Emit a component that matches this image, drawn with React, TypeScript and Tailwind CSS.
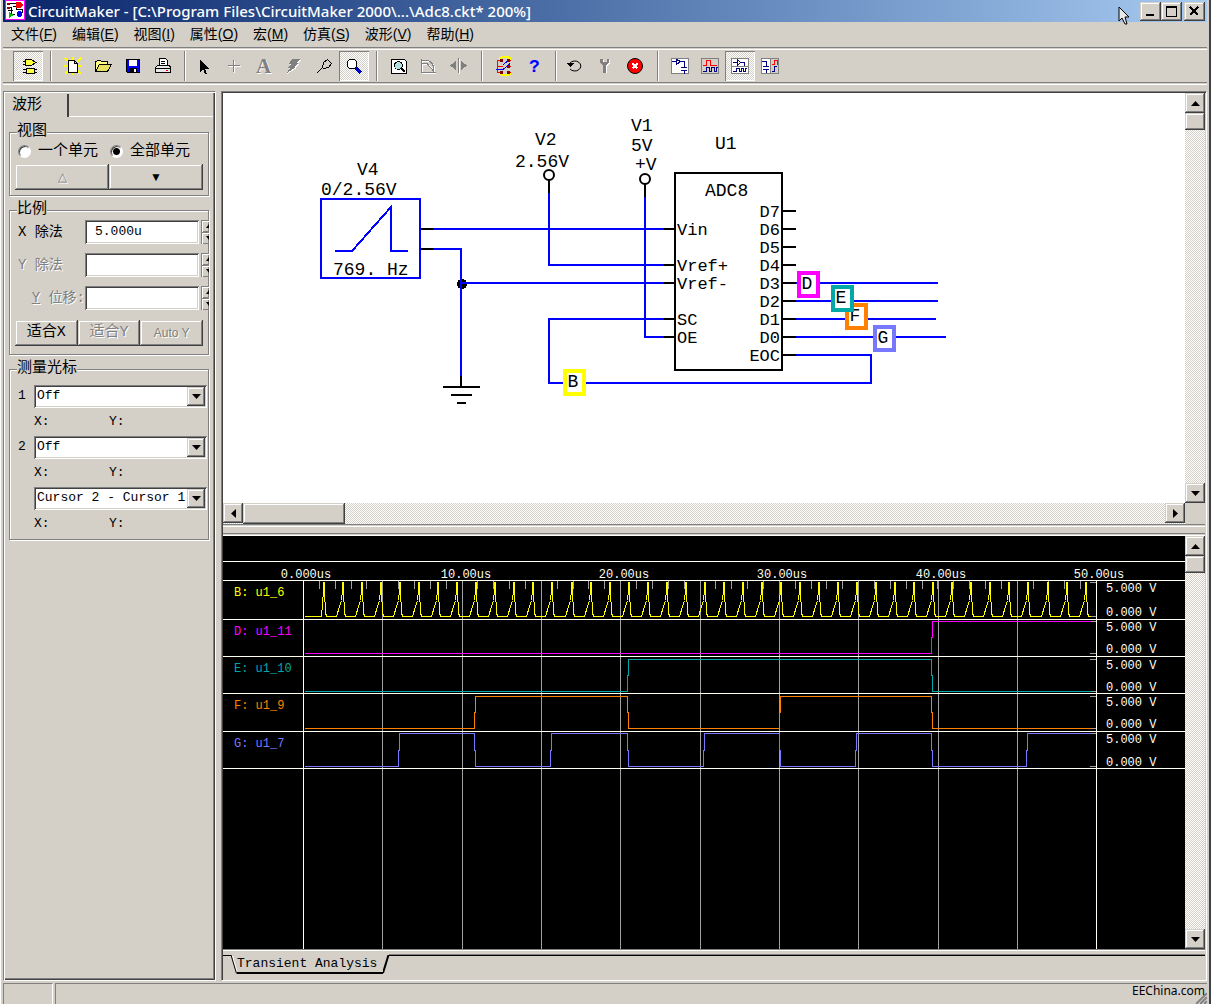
import React from 'react';

const MONO = "font-['Liberation_Mono','Noto_Sans_CJK_SC',monospace]";
const RAISED =
  'bg-[#d4d0c8] shadow-[inset_-1px_-1px_#404040,inset_1px_1px_#d4d0c8,inset_-2px_-2px_#808080,inset_2px_2px_#fff]';
const SUNKEN =
  'bg-white shadow-[inset_1px_1px_#808080,inset_-1px_-1px_#fff,inset_2px_2px_#404040,inset_-2px_-2px_#d4d0c8]';
const DITHER =
  'bg-[conic-gradient(#fff_25%,#d4d0c8_0_50%,#fff_0_75%,#d4d0c8_0)] bg-[length:2px_2px]';
const DISABLED = 'text-[#808080] [text-shadow:1px_1px_#fff]';

/* ---------- Title bar ---------- */

function AppLogo() {
  return (
    <svg width="20" height="20" viewBox="0 0 20 20" shapeRendering="crispEdges" className="mb-0.5 shrink-0" aria-hidden="true">
      <rect width="20" height="20" fill="#ff00ff" />
      <rect x="1" y="1" width="18" height="18" fill="#fff" />
      <path d="M2 3.500h9M3 7.500h3v7h4M8 6.500h3v3h6v3M3 10.500h5" stroke="#000" fill="none" />
      <path d="M2 3h3v2h-3zM2 7h3v2h-3z" fill="#a00000" />
      <path d="M11 2h4l3 3l-3 3h-4z" fill="#f00" />
      <path d="M4 12l5 3l-5 3z" fill="#00c000" />
      <circle cx="14.500" cy="14" r="3" fill="#00f" />
    </svg>
  );
}

function WindowButton({ label, children }: { label: string; children: React.ReactNode }) {
  return (
    <button aria-label={label} className={`flex h-[19px] w-[21px] items-center justify-center ${RAISED}`}>
      <svg width="13" height="13" viewBox="0 0 13 13" shapeRendering="crispEdges" fill="none" stroke="#000">
        {children}
      </svg>
    </button>
  );
}

function TitleBar() {
  return (
    <header className="flex h-[22px] shrink-0 items-center bg-linear-to-r from-[#0a246a] to-[#a6caf0] pr-0.5 pl-0.5">
      <AppLogo />
      <h1 className="ml-[3px] flex-1 truncate font-['Noto_Sans',sans-serif] text-[15px] leading-5 font-medium whitespace-pre text-white">
        {'CircuitMaker - [C:\\Program Files\\CircuitMaker 2000\\...\\Adc8.ckt* 200%]'}
      </h1>
      <svg width="12" height="19" viewBox="0 0 12 19" className="relative z-10 mt-2 mr-2.5 shrink-0" aria-hidden="true">
        <path d="M1 1v14l3-3l3 6h2l-2-7h4z" fill="#e8e8e8" stroke="#000" />
      </svg>
      <WindowButton label="Minimize"><path d="M2 10h8" strokeWidth="2" /></WindowButton>
      <WindowButton label="Maximize"><path d="M1.500 1.500h10v10h-10zM1 2.500h11" /></WindowButton>
      <span className="w-0.5" />
      <WindowButton label="Close">
        <path d="M2 2l8 8M10 2l-8 8" strokeWidth="2" />
      </WindowButton>
    </header>
  );
}

/* ---------- Menu ---------- */

const MENUS: [string, string][] = [
  ['文件', 'F'], ['编辑', 'E'], ['视图', 'I'], ['属性', 'O'], ['宏', 'M'], ['仿真', 'S'], ['波形', 'V'], ['帮助', 'H'],
];

function MenuBar() {
  return (
    <nav className="flex h-[25px] shrink-0 items-center gap-[15px] pb-0.5 pl-2 font-['Liberation_Sans','Noto_Sans_CJK_SC',sans-serif] text-sm">
      {MENUS.map(([name, key]) => (
        <button key={name} className="whitespace-nowrap">
          {name}(<u>{key}</u>)
        </button>
      ))}
    </nav>
  );
}

/* ---------- Toolbar ---------- */

function Tool({ label, pressed, children }: { label: string; pressed?: boolean; children: React.ReactNode }) {
  return (
    <button
      aria-label={label}
      className={`flex size-[30px] items-center justify-center ${
        pressed ? `${DITHER} shadow-[inset_1px_1px_#808080,inset_-1px_-1px_#fff]` : ''
      }`}
    >
      <svg width="20" height="20" viewBox="0 0 20 20" shapeRendering="crispEdges" fill="none" stroke="#000" className="overflow-visible">
        {children}
      </svg>
    </button>
  );
}

function Divider({ narrow }: { narrow?: boolean }) {
  return (
    <span
      className={`h-[30px] w-0.5 border-r border-l border-r-white border-l-[#808080] ${narrow ? 'mr-[3px] ml-1.5' : 'mr-1.5 ml-[7px]'}`}
    />
  );
}

function Groove() {
  return <div className="h-[3px] shrink-0 border-t border-b border-t-[#808080] border-b-white" />;
}

function ToolBar() {
  return (
    <div role="toolbar" className="flex h-8 shrink-0 items-center pl-2.5">
      <Tool label="Digital parts" pressed>
        <path d="M7.500 3.500h6l4 3l-4 3h-6zM8.500 12.500h8v5h-8z" fill="#ffff40" />
        <path d="M5 5.500h3M5 8.500h3M17 6.500h2M5 13.500h3M5 16.500h3M16 13.500h3M16 16.500h3" />
      </Tool>
      <Divider />
      <Tool label="New">
        <path d="M2 2l4 4M18 2l-4 4M2 18l4-4M18 18l-4-4M10 1v3M1 10h4M15 10h4M10 16v3" stroke="#ffff00" strokeWidth="2" />
        <path d="M5.500 4.500h6l3 3v9h-9zM11.500 4.500v3h3" fill="#fff" />
      </Tool>
      <Tool label="Open">
        <path d="M2.500 15.500v-10h1l1-1h3l1 1h6v3" fill="#ffff80" />
        <path d="M2.500 15.500l4-7h12l-4 7z" fill="#e8e060" />
      </Tool>
      <Tool label="Save">
        <path d="M3.500 3.500h13v13h-12l-1-1z" fill="#00f" />
        <path d="M6 4h8v6h-8z" fill="#fff" stroke="none" />
        <path d="M6 12h8v5h-8z" fill="#000" stroke="none" />
        <path d="M11 13h2v3h-2z" fill="#fff" stroke="none" />
      </Tool>
      <Tool label="Print">
        <path d="M6.500 9.500v-7h6l2 2v5" fill="#fff" />
        <path d="M8 5.500h4M8 7.500h4" />
        <path d="M4.500 9.500h12l1 2v5h-15v-5z" fill="#e8e8e8" />
        <path d="M3 12.500h14" />
        <path d="M13 14.500h2" stroke="#f00" />
      </Tool>
      <Divider narrow />
      <Tool label="Select">
        <path d="M6 3v13l3-3l2 5h2l-2-5h4z" fill="#000" stroke="none" />
      </Tool>
      <Tool label="Wire">
        <path d="M10.500 5v12M5 10.500h12" stroke="#fff" />
        <path d="M9.500 4v12M4 9.500h12" stroke="#808080" />
      </Tool>
      <Tool label="Text">
        <g shapeRendering="auto">
          <text x="3" y="18" fontSize="21" fontFamily="Liberation Serif" fontWeight="bold" fill="#fff" stroke="none">A</text>
          <text x="2" y="17" fontSize="21" fontFamily="Liberation Serif" fontWeight="bold" fill="#808080" stroke="none">A</text>
        </g>
      </Tool>
      <Tool label="Delete">
        <path d="M9 4h8l-4 4h3l-5 4h2l-10 6l4-5h-3l4-4h-2z" fill="#fff" stroke="none" />
        <path d="M8 3h8l-4 4h3l-5 4h2l-9 6l3-5h-3l4-4h-2z" fill="#808080" stroke="none" />
      </Tool>
      <Tool label="Probe">
        <path d="M2.500 17.500l6-6M8.500 11.500l1-5l4-3l4 4l-3 4l-5 1z" />
      </Tool>
      <Tool label="Zoom" pressed>
        <circle cx="8" cy="8" r="5" fill="#fff" />
        <path d="M12 12l5 5" stroke="#0000c0" strokeWidth="3" />
      </Tool>
      <Divider />
      <Tool label="Fit">
        <path d="M2.500 3.500h13l2 2v12h-15z" fill="#fff" />
        <circle cx="9.500" cy="9.500" r="4" fill="#b0e0e0" />
        <path d="M12 12l4 4" strokeWidth="2" />
      </Tool>
      <Tool label="Rotate">
        <path d="M3 4v13h14M4 5h6M4 8h5l7 8M9 5q7 2 7 11" stroke="#fff" />
        <path d="M2.500 3v13h14M3 4.500h6M3 7.500h5l7 8M8 4q7 2 7 11" stroke="#808080" />
      </Tool>
      <Tool label="Mirror">
        <path d="M10.500 3v15" stroke="#fff" />
        <path d="M9.500 2v15" stroke="#808080" />
        <path d="M7 5v9l-6-4.500zM12 5v9l6-4.500z" fill="#808080" stroke="none" />
      </Tool>
      <Divider />
      <Tool label="Digital options">
        <path d="M5 3l3-2h6l3 2M5 17l3 2h6l3-2" stroke="#ff0" strokeWidth="2" />
        <path d="M4 4.500h5M4 10.500h5M4 16.500h5M3.500 4v13M13 4.500h4M13 10.500h4M13 16.500h4" stroke="#f00" />
        <path d="M2 13.500h7l7-6M9 9l7-6" stroke="#00f" />
        <path d="M6 3h3v3h-3zM13 3h3v3h-3zM13 9h3v3h-3zM6 15h3v3h-3zM13 15h3v3h-3z" fill="#800000" stroke="none" />
      </Tool>
      <Tool label="Help">
        <text x="5" y="16" fontSize="18" fontFamily="Liberation Mono" fontWeight="bold" fill="#00f" stroke="none">?</text>
      </Tool>
      <Divider narrow />
      <Tool label="Reset">
        <path d="M5 7a6 5 0 1 1 0 6" shapeRendering="auto" />
        <path d="M2 7h7l-4 4z" fill="#000" stroke="none" />
      </Tool>
      <Tool label="Setup">
        <path d="M6 4v4l3 2v7h3v-7l3-2v-4h-2v3h-4v-3z" fill="#fff" stroke="none" />
        <path d="M5 3v4l3 2v8h3v-8l3-2v-4h-2v3h-4v-3z" fill="#808080" stroke="none" />
      </Tool>
      <Tool label="Stop">
        <circle cx="10" cy="10" r="7.500" fill="#f00" shapeRendering="auto" />
        <path d="M7.500 7.500l5 5M12.500 7.500l-5 5" stroke="#fff" strokeWidth="2" />
      </Tool>
      <Divider />
      <Tool label="Schematic view">
        <path d="M1.500 2.500h17v15h-17z" fill="#fff" stroke="#808080" />
        <path d="M2 5.500h4M10 5.500h4v6M11 11.500h6M11 14.500h6M14.500 14v4M6.500 3.500v5l4-3z" stroke="#000080" />
      </Tool>
      <Tool label="Waveform view">
        <path d="M1.500 2.500h17v15h-17z" stroke="#808080" />
        <path d="M3 9.500h3v-5h4v5h7" stroke="#f00" />
        <path d="M3 15.500h3v-4h3v4h2v-4h3v4h2v-4h2" stroke="#000080" />
      </Tool>
      <Tool label="Split horizontal" pressed>
        <path d="M1.500 2.500h17v15h-17zM1 10.500h18" fill="#fff" stroke="#808080" />
        <path d="M3 6.500h4M11 6.500h3v3M7.500 4v5l3-2.500zM3 15.500h3v-3h3v3h2v-3h2v3h2v-3h2" stroke="#000080" />
      </Tool>
      <Tool label="Split vertical">
        <path d="M1.500 2.500h9v15h-9z" fill="#fff" stroke="#808080" />
        <path d="M10.500 2.500h8v15h-8z" stroke="#808080" />
        <path d="M2 5.500h4v5M3 10.500h6M3 13.500h6M6.500 13v4" stroke="#000080" />
        <path d="M12 8.500h2v-4h3v4" stroke="#f00" />
        <path d="M12 15.500h2v-5h3" stroke="#000080" />
      </Tool>
    </div>
  );
}

/* ---------- Side panel ---------- */

function Group({ title, children }: { title: string; children: React.ReactNode }) {
  return (
    <fieldset className="border border-[#808080] px-[5px] shadow-[1px_1px_#fff,inset_1px_1px_#fff]">
      <legend className="ml-0.5 bg-[#d4d0c8] text-[15px] leading-[18px]">{title}</legend>
      {children}
    </fieldset>
  );
}

function PanelButton({ disabled, small, children }: { disabled?: boolean; small?: boolean; children: React.ReactNode }) {
  return (
    <button
      disabled={disabled}
      className={`h-[26px] flex-1 whitespace-nowrap ${RAISED} ${disabled ? DISABLED : ''} ${
        small ? "font-['Liberation_Sans',sans-serif] text-xs" : 'text-[15px]'
      }`}
    >
      {children}
    </button>
  );
}

function NumberRow({ id, label, value, disabled, right }: {
  id: string; label: React.ReactNode; value: string; disabled?: boolean; right?: boolean;
}) {
  return (
    <div className="flex h-[33px] items-center">
      <label
        htmlFor={id}
        className={`w-[70px] shrink-0 pl-[3px] whitespace-pre text-sm ${disabled ? DISABLED : ''} ${right ? 'text-right' : ''}`}
      >
        {label}
      </label>
      <input id={id} disabled={disabled} defaultValue={value} className={`h-6 w-0 flex-1 px-2.5 text-[13px] ${SUNKEN}`} />
      <div className="-mr-1.5 ml-0.5 w-2 shrink-0 overflow-hidden">
        {['Increase', 'Decrease'].map((name) => (
          <button
            key={name}
            aria-label={name}
            className="flex h-3 w-4 items-center border-t border-l border-[#808080] pl-1 shadow-[inset_1px_1px_#fff,inset_0_-1px_#808080]"
          >
            <svg width="6" height="4" viewBox="0 0 6 4">
              <path d={name === 'Increase' ? 'M0 4h6l-3-4z' : 'M0 0h6l-3 4z'} />
            </svg>
          </button>
        ))}
      </div>
    </div>
  );
}

function CursorSelect({ label, index, value }: { label: string; index: string; value: string }) {
  return (
    <>
      <div className="-mr-1 flex h-6 items-center">
        <span className="w-[19px] shrink-0 pl-[3px] text-[13px]">{index}</span>
        <div className="relative h-[23px] flex-1">
          <select aria-label={label} className={`block h-[23px] w-full appearance-none pl-[3px] text-[13px] ${SUNKEN}`}>
            <option>{value}</option>
          </select>
          <span className={`pointer-events-none absolute top-0.5 right-0.5 flex h-[19px] w-[18px] items-center justify-center ${RAISED}`}>
            <Arrow dir="down" />
          </span>
        </div>
      </div>
      <div className="flex h-[27px] items-center pl-[19px] text-[13px]">
        <span className="w-[75px]">X:</span>
        <span>Y:</span>
      </div>
    </>
  );
}

const RADIO =
  'block size-[13px] shrink-0 appearance-none rounded-full border border-[#808080] border-r-white border-b-white bg-white shadow-[inset_1px_1px_#404040] checked:bg-[radial-gradient(#000_0_3px,#fff_4px)]';

function SidePanel() {
  return (
    <aside className="flex w-[213px] shrink-0 flex-col border border-[#808080] border-r-white border-b-white">
      <div className={`flex-1 pt-0.5 pr-1.5 pb-2 pl-[5px] shadow-[inset_1px_1px_#fff,inset_-1px_-1px_#404040,inset_-2px_-2px_#808080] ${MONO}`}>
        <div className="-mr-1 flex h-[23px]">
          <button className="-ml-1 w-[64px] border-r-2 border-r-[#404040] pl-[7px] text-left text-[15px] leading-5">波形</button>
          <span className="flex-1 border-b border-white" />
        </div>
        <div className="flex flex-col gap-[5px] pt-1.5">
          <Group title="视图">
            <div className="-mt-0.5 flex h-[25px] items-center gap-3 pl-[3px] text-[15px]">
              <label className="flex items-center gap-[7px] leading-5 whitespace-nowrap">
                <input type="radio" name="cells" className={RADIO} />
                一个单元
              </label>
              <label className="flex items-center gap-[7px] leading-5 whitespace-nowrap">
                <input type="radio" name="cells" defaultChecked className={RADIO} />
                全部单元
              </label>
            </div>
            <div className="mb-[5px] flex">
              <PanelButton disabled small>△</PanelButton>
              <PanelButton small>▼</PanelButton>
            </div>
          </Group>
          <Group title="比例">
            <div className="-mt-1">
              <NumberRow id="xdiv" label="X 除法" value="5.000u" />
              <NumberRow id="ydiv" label="Y 除法" value="" disabled />
              <NumberRow id="yoff" label={<><u>Y</u> 位移:</>} value="" disabled right />
            </div>
            <div className="mt-1.5 mb-2 flex">
              <PanelButton>适合X</PanelButton>
              <PanelButton disabled>适合Y</PanelButton>
              <PanelButton disabled small>Auto Y</PanelButton>
            </div>
          </Group>
          <Group title="测量光标">
            <div className="pt-1.5 pb-0.5">
              <CursorSelect label="Cursor 1" index="1" value="Off" />
              <CursorSelect label="Cursor 2" index="2" value="Off" />
              <CursorSelect label="Cursor difference" index="" value="Cursor 2 - Cursor 1" />
            </div>
          </Group>
        </div>
      </div>
    </aside>
  );
}

/* ---------- Scroll bars ---------- */

function Arrow({ dir }: { dir: 'up' | 'down' | 'left' | 'right' }) {
  const shape = {
    up: 'M0 7h9l-4.500-5z',
    down: 'M0 2h9l-4.500 5z',
    left: 'M7 0v9l-5-4.500z',
    right: 'M2 0v9l5-4.500z',
  }[dir];
  return (
    <svg width="9" height="9" viewBox="0 0 9 9" aria-hidden="true">
      <path d={shape} />
    </svg>
  );
}

function ScrollButton({ dir }: { dir: 'up' | 'down' | 'left' | 'right' }) {
  return (
    <button aria-label={`Scroll ${dir}`} className={`flex size-5 shrink-0 items-center justify-center ${RAISED}`}>
      <Arrow dir={dir} />
    </button>
  );
}

function VScroll() {
  return (
    <div className={`flex w-5 shrink-0 flex-col ${DITHER}`}>
      <ScrollButton dir="up" />
      <div className={`h-[17px] ${RAISED}`} />
      <div className="flex-1" />
      <ScrollButton dir="down" />
    </div>
  );
}

function HScroll() {
  return (
    <div className={`flex h-[21px] items-stretch ${DITHER}`}>
      <ScrollButton dir="left" />
      <div className={`w-[102px] ${RAISED}`} />
      <div className="flex-1" />
      <ScrollButton dir="right" />
      <div className="w-5 bg-[#d4d0c8]" />
    </div>
  );
}

/* ---------- Schematic ---------- */

const LEFT_PINS: [string, number][] = [['Vin', 136], ['Vref+', 172], ['Vref-', 190], ['SC', 226], ['OE', 244]];
const RIGHT_PINS = ['D7', 'D6', 'D5', 'D4', 'D3', 'D2', 'D1', 'D0', 'EOC'];
const PROBES: [string, number, number, string][] = [
  ['B', 342, 278, '#ffff00'],
  ['D', 576, 180, '#ff00ff'],
  ['F', 624, 212, '#ff8000'],
  ['E', 610, 194, '#00a8a8'],
  ['G', 652, 234, '#7878ff'],
];
const PARTS: [string, number, number][] = [
  ['V4', 134, 82], ['0/2.56V', 98, 102], ['769. Hz', 110, 182], ['V2', 312, 52], ['2.56V', 292, 74],
  ['V1', 408, 38], ['5V', 408, 58], ['+V', 412, 77], ['U1', 492, 56], ['ADC8', 482, 103],
];

function Schematic() {
  return (
    <svg className="size-full" shapeRendering="crispEdges" fontFamily="Liberation Mono, monospace" role="img" aria-label="Adc8 circuit">
      <g fill="none" stroke="#0000ff" strokeWidth="2">
        <rect x="98" y="106" width="99" height="79" />
        <path d="M112 158h17l39-44v44h17" />
        <path d="M210 136h231M326 100v72h115M422 104v140h19" />
        <path d="M573 262h75v28h-322v-64h115" />
        <path d="M573 190h142M573 208h142M573 226h140M573 244h150" />
      </g>
      <circle cx="239" cy="191" r="5" />
      <path d="M210 156h28v127M238 190h203" fill="none" stroke="#0000ff" strokeWidth="2" />
      <g fill="none" stroke="#000" strokeWidth="2">
        <path d="M198 136h12M198 156h12M326 87v13M422 91v13M238 283v11M220 294h37M228 302h21M234 310h9" />
        <circle cx="326" cy="82" r="5" fill="#fff" shapeRendering="auto" />
        <circle cx="422" cy="86" r="5" fill="#fff" shapeRendering="auto" />
        <rect x="452" y="80" width="107" height="197" />
      </g>
      {LEFT_PINS.map(([name, y]) => (
        <g key={name}>
          <path d={`M441 ${y}h11`} stroke="#000" strokeWidth="2" />
          <text x="454" y={y + 6} fontSize="17">{name}</text>
        </g>
      ))}
      {RIGHT_PINS.map((name, i) => (
        <g key={name}>
          <path d={`M560 ${118 + i * 18}h13`} stroke="#000" strokeWidth="2" />
          <text x="557" y={124 + i * 18} fontSize="17" textAnchor="end">{name}</text>
        </g>
      ))}
      {PARTS.map(([label, x, y]) => (
        <text key={label} x={x} y={y} fontSize="18">{label}</text>
      ))}
      {PROBES.map(([name, x, y, color]) => (
        <g key={name}>
          <rect x={x} y={y} width="19" height="23" fill="#fff" stroke={color} strokeWidth="4" />
          <text x={x + 8} y={y + 16} fontSize="18" textAnchor="middle">{name}</text>
        </g>
      ))}
    </svg>
  );
}

/* ---------- Waveforms ---------- */

const GRID = [159, 239, 318, 397, 477, 556, 635, 715, 794];
const TIMES: [string, number][] = [
  ['0.000us', 83], ['10.00us', 243], ['20.00us', 401], ['30.00us', 559], ['40.00us', 718], ['50.00us', 876],
];

type Trace = { name: string; color: string; text: number; high: number; low: number; end: number; edges: number[] };

const TRACES: Trace[] = [
  { name: 'B: u1_6', color: '#ffff00', text: 60, high: 46, low: 80, end: 83, edges: [] },
  { name: 'D: u1_11', color: '#ff00ff', text: 99, high: 85, low: 117, end: 120, edges: [709] },
  { name: 'E: u1_10', color: '#00a8a8', text: 136, high: 123, low: 155, end: 157, edges: [405, 709] },
  { name: 'F: u1_9', color: '#ff8000', text: 173, high: 160, low: 192, end: 195, edges: [252, 405, 557, 709] },
  { name: 'G: u1_7', color: '#7878ff', text: 211, high: 197, low: 230, end: 232, edges: [176, 252, 328, 405, 481, 557, 633, 709, 804] },
];

function squareWave({ high, low, edges }: Trace) {
  let level = low;
  let d = `M81 ${low}`;
  for (const x of edges) {
    const next = level === low ? high : low;
    const mid = Math.round((high + low) / 2);
    d += `H${x - 1}V${mid}H${x}V${next}`;
    level = next;
  }
  return `${d}H867`;
}

function conversionPulses({ high, low }: Trace) {
  let d = `M81 ${low}`;
  for (let i = 0; i < 41; i++) {
    const x = Math.round(101 + i * 19.04);
    d += i === 0 ? `H${x - 3}L${x - 2} 68` : `H${x - 7}L${x - 4} 70L${x - 2} 64`;
    d += `L${x - 1} 54V${high}H${x}V55L${x + 1} 76L${x + 2} ${low}`;
  }
  return `${d}H867`;
}

function Waveforms() {
  return (
    <svg
      className="size-full bg-black"
      shapeRendering="crispEdges"
      fontFamily="Liberation Mono, monospace"
      fontSize="12"
      role="img"
      aria-label="Transient analysis waveforms"
    >
      <g fill="#a0a0a0">
        {GRID.map((x) => <rect key={x} x={x} y="44" width="1" height="100%" />)}
        {Array.from({ length: 49 }, (_, i) => (
          <rect key={i} x={Math.round(80 + (i + 1) * 15.86)} y="45" width="1" height="8" />
        ))}
        {TRACES.map((t) => (
          <React.Fragment key={t.name}>
            <rect x="867" y={t.high} width="6" height="1" />
            <rect x="867" y={t.low} width="6" height="1" />
          </React.Fragment>
        ))}
      </g>
      <g transform="translate(0.5 0.5)" fill="none">
        {TRACES.map((t) => (
          <path key={t.name} d={t.edges.length ? squareWave(t) : conversionPulses(t)} stroke={t.color} />
        ))}
      </g>
      <g fill="#fffff0">
        <rect y="25" width="100%" height="1" />
        <rect y="44" width="100%" height="1" />
        {TRACES.map((t) => <rect key={t.name} y={t.end} width="100%" height="1" />)}
        <rect x="80" y="44" width="1" height="100%" />
        <rect x="873" y="44" width="1" height="100%" />
        {TIMES.map(([label, x]) => <text key={label} x={x} y="42" textAnchor="middle">{label}</text>)}
        {TRACES.map((t) => (
          <React.Fragment key={t.name}>
            <text x="11" y={t.text} fill={t.color}>{t.name}</text>
            <text x="883" y={t.high + 10}>5.000 V</text>
            <text x="883" y={t.low}>0.000 V</text>
          </React.Fragment>
        ))}
      </g>
    </svg>
  );
}

function AnalysisTabs() {
  return (
    <div className="h-[31px] shrink-0 border-t border-[#808080]">
      <div className="h-[5px] border-t border-white" />
      <div className="flex items-start">
        <span className="w-2 border-t border-black" />
        <svg width="6" height="19" viewBox="0 0 6 19" fill="none">
          <path d="M1.500 1l5 17" stroke="#fff" />
          <path d="M0 0l5.500 18.500" stroke="#000" />
        </svg>
        <button className={`h-[19px] border-b-2 border-black pr-1.5 leading-[18px] text-[13px] whitespace-nowrap ${MONO}`}>
          Transient Analysis
        </button>
        <svg width="6" height="19" viewBox="0 0 6 19" fill="none">
          <path d="M0 18l5.500-18" stroke="#000" strokeWidth="2" />
        </svg>
        <span className="flex-1 border-t border-black shadow-[0_-1px_#808080]" />
      </div>
    </div>
  );
}

/* ---------- Status bar ---------- */

function StatusBar() {
  return (
    <footer className="flex h-[23px] shrink-0 gap-0.5 pt-0.5">
      <div className="w-[50px] border-t border-r border-l border-[#808080] border-r-white" />
      <div className="flex flex-1 items-start justify-end border-t border-l border-[#808080]">
        <span className="relative z-10 -mr-2.5 font-['Noto_Sans',sans-serif] text-xs leading-[13px]">EEChina.com</span>
        <svg width="12" height="20" viewBox="0 0 12 20" aria-hidden="true">
          <path d="M0 20L12 8M4 20l8-8M8 20l4-4" stroke="#fff" />
          <path d="M1 20L12 9M5 20l7-7M9 20l3-3" stroke="#808080" strokeWidth="2" />
        </svg>
      </div>
    </footer>
  );
}

export default function App() {
  return (
    <div className="flex h-screen min-h-[720px] flex-col overflow-hidden border-r-2 border-l border-r-[#404048] border-l-white bg-[#d4d0c8] pr-0.5 pl-0.5 text-black">
      <TitleBar />
      <MenuBar />
      <Groove />
      <ToolBar />
      <Groove />
      <main className="mt-1.5 flex min-h-0 flex-1 gap-[5px]">
        <SidePanel />
        <div className="flex min-w-0 flex-1 flex-col border border-[#808080] border-r-white border-b-white">
          <div className="flex min-h-0 flex-1 flex-col border-t border-l border-[#404040] pr-px">
            <section className="flex min-h-0 flex-[431] flex-col">
              <div className="flex min-h-0 flex-1">
                <div className="min-w-0 flex-1 overflow-hidden bg-white"><Schematic /></div>
                <VScroll />
              </div>
              <HScroll />
            </section>
            <div className="flex h-3 shrink-0 flex-col justify-between border-t border-b border-t-[#808080] border-b-white py-px">
              <span className="h-px bg-white" />
              <span className="h-px bg-[#808080]" />
            </div>
            <section className="flex min-h-0 flex-[413]">
              <div className="min-w-0 flex-1 overflow-hidden"><Waveforms /></div>
              <VScroll />
            </section>
            <AnalysisTabs />
          </div>
        </div>
      </main>
      <StatusBar />
    </div>
  );
}
